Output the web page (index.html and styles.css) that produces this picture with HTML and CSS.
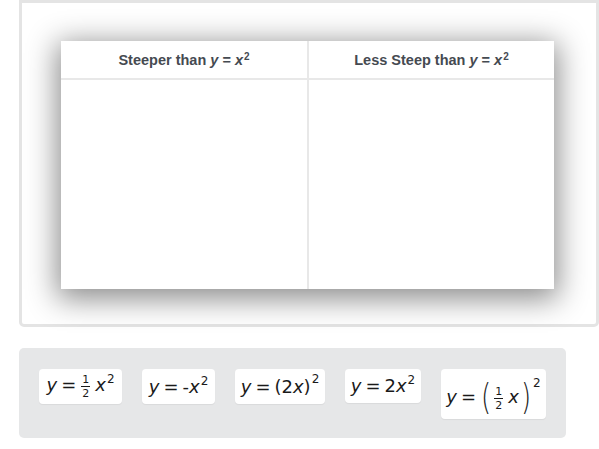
FILE: index.html
```html
<!DOCTYPE html>
<html>
<head>
<meta charset="utf-8">
<link rel="stylesheet" href="styles.css">
</head>
<body>
<div class="board">
  <div class="table">
    <div class="col">
      <div class="head"><span>Steeper than <i>y</i> = <i>x</i><sup>2</sup></span></div>
      <div class="body"></div>
    </div>
    <div class="col">
      <div class="head"><span>Less Steep than <i>y</i> = <i>x</i><sup>2</sup></span></div>
      <div class="body"></div>
    </div>
  </div>
</div>
<div class="tray">
  <div class="card c1"><span class="m"><i>y</i><span class="eq">=</span><span class="frac"><span class="num">1</span><span class="den">2</span></span><i>x</i><sup>2</sup></span></div>
  <div class="card c2"><span class="m"><i>y</i><span class="eq">=</span>-<i>x</i><sup>2</sup></span></div>
  <div class="card c3"><span class="m"><i>y</i><span class="eq">=</span>(2<i>x</i>)<sup class="p">2</sup></span></div>
  <div class="card c4"><span class="m"><i>y</i><span class="eq">=</span>2<i>x</i><sup>2</sup></span></div>
  <div class="card c5"><span class="m"><i>y</i><span class="eq">=</span><span class="big">(</span><span class="frac"><span class="num">1</span><span class="den">2</span></span><i>x</i><span class="big">)</span><sup class="hi">2</sup></span></div>
</div>
</body>
</html>
```
FILE: styles.css
```css
html, body { margin: 0; padding: 0; background: #fff; }
body { font-family: "Liberation Sans", Arial, sans-serif; width: 599px; height: 449px; overflow: hidden; }

.board {
  margin-left: 19px;
  border: 3px solid #e4e4e4;
  border-radius: 0 0 5px 5px;
  padding: 38px 42px 0 39px;
  box-sizing: border-box;
  width: 580px;
  height: 327px;
}

.table {
  display: flex;
  width: 493px;
  height: 248px;
  background: #fff;
  box-shadow: 0 6px 28px 4px rgba(0,0,0,0.45);
}
.col { display: flex; flex-direction: column; }
.col:first-child { width: 246px; border-right: 2px solid #e8e8e8; }
.col:last-child { flex: 1; }
.head {
  height: 36px;
  border-bottom: 2px solid #e8e8e8;
  display: flex;
  align-items: center;
  justify-content: center;
  font-weight: bold;
  font-size: 14.5px;
  color: #454a51;
  padding-top: 1px;
}
.head i { font-style: italic; }
.head sup { font-size: 10px; vertical-align: 5px; line-height: 0; margin-left: 1px; }
.body { flex: 1; }

.tray {
  margin: 21px 0 0 19px;
  width: 547px;
  height: 90px;
  background: #e6e7e8;
  border-radius: 5px;
  box-sizing: border-box;
  padding: 21px 20px 0 20px;
  display: flex;
  align-items: flex-start;
  gap: 20px;
}
.card {
  background: #fff;
  border-radius: 4px;
  height: 35px;
  display: flex;
  align-items: center;
  justify-content: center;
  box-sizing: border-box;
  box-shadow: 0 1px 1px rgba(0,0,0,0.06);
}
.c1 { width: 83px; }
.c2 { width: 73px; }
.c3 { width: 90px; }
.c4 { width: 76px; height: 34px; }
.c5 { width: 105px; height: 50px; padding-top: 6px; }

.m {
  font-family: "DejaVu Sans", Verdana, sans-serif;
  font-size: 18px;
  line-height: 20px;
  color: #1a1a1a;
  white-space: nowrap;
}
.m i { font-style: oblique; }
.m .eq { margin: 0 4px; }
.m sup { font-size: 12px; vertical-align: 8px; line-height: 0; margin-left: 1px; }
.m sup.p { vertical-align: 10px; }
.frac {
  display: inline-block;
  vertical-align: -6px;
  font-size: 11px;
  line-height: 11px;
  text-align: center;
  margin: 0 5px 0 1px;
}
.frac .num, .frac .den { display: block; padding: 0 1px; }
.frac .num { border-bottom: 1px solid #1a1a1a; padding-bottom: 1px; }
.frac .den { padding-top: 1px; }
.c5 .eq { margin-right: 3px; }
.big { font-size: 26px; font-weight: 200; display: inline-block; transform: scaleY(1.35); vertical-align: -3px; margin: 0 2px; }
.m sup.hi { vertical-align: 16px; margin-left: 0; }
```
